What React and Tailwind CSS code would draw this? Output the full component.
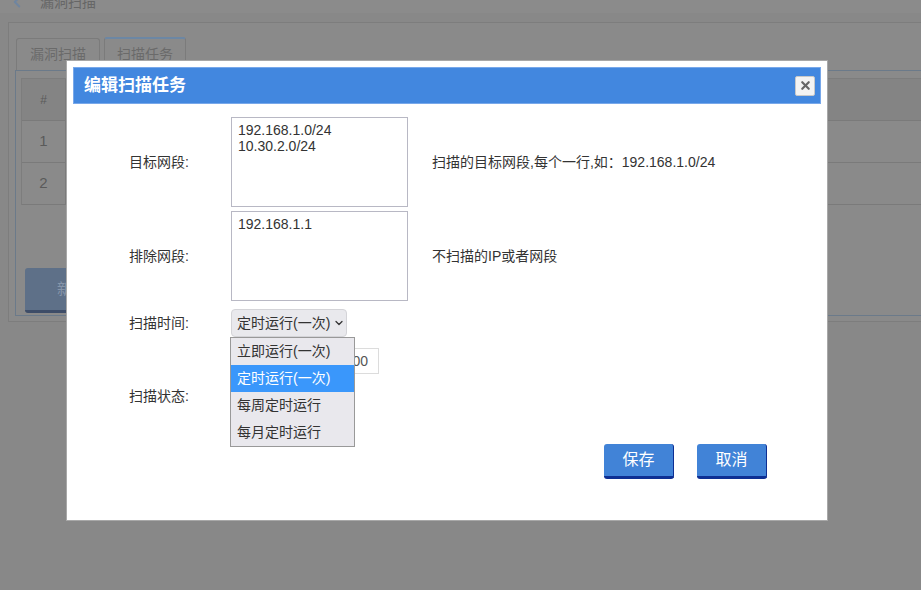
import React from "react";
import { ChevronLeft, ChevronDown, X } from "lucide-react";

const FONT = { fontFamily: '"Liberation Sans", "Noto Sans CJK SC", sans-serif' };

const options = ["立即运行(一次)", "定时运行(一次)", "每周定时运行", "每月定时运行"];

const FormRow = ({ label, children, help, className = "" }) => (
  <div className={`flex items-center ${className}`}>
    <div className="w-[102px] shrink-0 text-[14px] text-[#333]">{label}</div>
    <div className="shrink-0">{children}</div>
    {help && <div className="ml-[24px] text-[14px] text-[#333]">{help}</div>}
  </div>
);

const App = () => {
  return (
    <div className="relative w-[921px] h-[590px] overflow-hidden bg-[#888888]" style={FONT}>
      {/* page behind the modal (already dimmed) */}
      <div className="h-[20px] bg-[#8b8b8b] flex items-start pl-[8px] -mt-[7px] overflow-hidden">
        <ChevronLeft className="w-[18px] h-[18px] text-[#6f85a0]" strokeWidth={2.5} />
        <span className="ml-[14px] text-[14px] leading-[18px] text-[#666]">漏洞扫描</span>
      </div>
      <div className="ml-[8px] mt-[9px] w-[1000px] h-[300px] border border-[#7d7d7d] bg-[#8a8a8a] pl-[6px] pt-[15px]">
        <div className="flex h-[32px] items-end">
          <div className="ml-[1px] w-[84px] h-[32px] border border-b-0 border-[#7b7b7b] rounded-t-[3px] flex items-center justify-center text-[14px] text-[#6a6a6a]">
            漏洞扫描
          </div>
          <div className="ml-[4px] w-[82px] h-[33px] border border-b-0 border-[#7b7b7b] border-t-2 border-t-[#6c87a4] rounded-t-[3px] flex items-center justify-center text-[14px] text-[#6a6a6a] bg-[#8a8a8a]">
            扫描任务
          </div>
        </div>
        <div className="h-[246px] border border-[#6b7a8a] px-[5px] pt-[7px]">
          <div className="border border-[#7d7d7d] border-b-0">
            <div className="flex h-[42px] bg-[#848484] border-b border-[#7a7a7a]">
              <div className="w-[44px] border-r border-[#7a7a7a] flex items-center justify-center text-[12px] text-[#5a5a5a]">#</div>
            </div>
            {[1, 2].map((n) => (
              <div key={n} className="flex h-[42px] border-b border-[#7a7a7a]">
                <div className="w-[44px] border-r border-[#7a7a7a] flex items-center justify-center text-[15px] text-[#5a5a5a]">{n}</div>
              </div>
            ))}
          </div>
          <div className="mt-[63px] ml-[4px] w-[90px] h-[45px] rounded-[3px] bg-[#5e7088] border-b-[3px] border-[#3e4d68] flex items-center pl-[32px] text-[15px] text-[#8796aa]">
            新建
          </div>
        </div>
      </div>

      {/* modal */}
      <div className="absolute left-[66px] top-[60px] w-[762px] h-[461px] bg-white border border-[#a8a8a8] p-[6px]">
        <div className="h-[37px] bg-[#4287df] border border-[#78a8ea] flex items-center justify-between pl-[10px] pr-[5px]">
          <span className="text-[17px] font-bold text-white">编辑扫描任务</span>
          <div className="w-[20px] h-[20px] bg-[#f3f3f3] border border-[#c8c8c8] rounded-[2px] flex items-center justify-center">
            <X className="w-[13px] h-[13px] text-[#666]" strokeWidth={4} />
          </div>
        </div>

        <div className="relative pl-[56px] pt-[13px]">
          <FormRow label="目标网段:" help="扫描的目标网段,每个一行,如：192.168.1.0/24">
            <div className="w-[177px] h-[90px] border border-[#b8b8c4] px-[6px] py-[4px] text-[14px] leading-[16px] text-[#333]">
              <div>192.168.1.0/24</div>
              <div>10.30.2.0/24</div>
            </div>
          </FormRow>
          <FormRow label="排除网段:" help="不扫描的IP或者网段" className="mt-[4px]">
            <div className="w-[177px] h-[90px] border border-[#b8b8c4] px-[6px] py-[4px] text-[14px] leading-[16px] text-[#333]">
              <div>192.168.1.1</div>
            </div>
          </FormRow>
          <FormRow label="扫描时间:" className="mt-[8px]">
            <div className="w-[116px] h-[28px] bg-[#e9e9ed] border border-[#d4d4d8] rounded-[4px] flex items-center pl-[5px] text-[14px] text-[#333] whitespace-nowrap">
              定时运行(一次)
              <ChevronDown className="ml-[3px] w-[12px] h-[12px] shrink-0 text-[#333]" strokeWidth={2.5} />
            </div>
          </FormRow>
          <FormRow label="" className="mt-[11px]">
            <div className="w-[148px] h-[26px] border border-[#dcdcdc] flex items-center pl-[6px] text-[14px] text-[#555] whitespace-nowrap overflow-hidden">
              2019-01-01 00:00:00
            </div>
          </FormRow>
          <FormRow label="扫描状态:" className="mt-[10px] h-[24px]">
            <div className="h-[24px]" />
          </FormRow>

          <div className="flex justify-end gap-[23px] mr-[54px] mt-[36px]">
            {["保存", "取消"].map((t) => (
              <div
                key={t}
                className="w-[70px] h-[35px] rounded-[3px] bg-[#4183d7] border-b-[3px] border-r border-[#0d2f93] flex items-center justify-center text-[16px] text-white"
              >
                {t}
              </div>
            ))}
          </div>

          {/* open select list */}
          <div className="absolute left-[157px] top-[233px] w-[125px] bg-[#e9e8ed] border border-[#999]">
            {options.map((o, i) => (
              <div
                key={o}
                className={`h-[27px] flex items-center pl-[6px] text-[14px] ${
                  i === 1 ? "bg-[#3a97fb] text-white" : "text-[#333]"
                }`}
              >
                {o}
              </div>
            ))}
          </div>
        </div>
      </div>
    </div>
  );
};

export default App;
